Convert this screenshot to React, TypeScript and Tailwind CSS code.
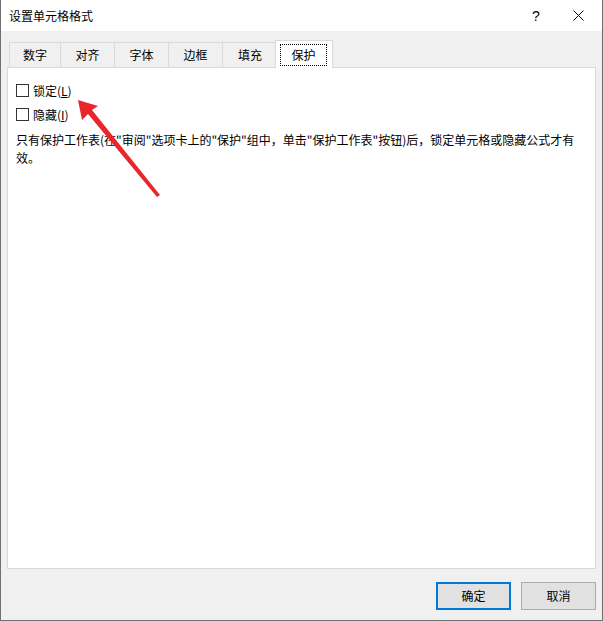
import React from 'react';

const tabs = [
  { label: '数字', cls: 'ml-[2px] w-[52px]' },
  { label: '对齐', cls: '-ml-px w-[55px]' },
  { label: '字体', cls: '-ml-px w-[55px]' },
  { label: '边框', cls: '-ml-px w-[55px]' },
  { label: '填充', cls: '-ml-px w-[56px]' },
];

export default function App() {
  return (
    <div className="relative w-[603px] h-[621px] flex flex-col bg-[#f0f0f0] border-x border-b border-[#707070] text-[12px] text-black font-['Noto_Sans_CJK_SC','Noto_Sans',sans-serif]">
      {/* 标题栏 */}
      <div className="h-[31px] bg-white flex items-center pl-[8px]">
        <span className="leading-none">设置单元格格式</span>
        <span className="ml-auto w-[14px] text-center text-[14px] leading-none font-['Liberation_Sans',sans-serif]">?</span>
        <div className="w-[46px] ml-[12px] mr-[1px] flex justify-center">
          <svg width="11" height="11" viewBox="0 0 11 11" stroke="#000" strokeWidth="1">
            <path d="M0.5 0.5 L10.5 10.5 M10.5 0.5 L0.5 10.5" />
          </svg>
        </div>
      </div>

      <div className="flex-1 flex flex-col px-[6px]">
        {/* 标签页 */}
        <div className="mt-[9px] h-[27px] flex items-end">
          {tabs.map((tab) => (
            <div key={tab.label} className={`${tab.cls} h-[25px] flex items-center justify-center border-t border-x border-[#d9d9d9] bg-[#f0f0f0]`}>
              {tab.label}
            </div>
          ))}
          <div className="relative z-10 -ml-[3px] -mb-px w-[58px] h-[28px] bg-white border-t border-x border-[#d9d9d9] pt-[3px] pl-[4px] pr-[5px] pb-[2px]">
            <div className="w-full h-full flex items-center justify-center border border-dotted border-black">保护</div>
          </div>
        </div>

        {/* 内容 */}
        <div className="h-[502px] bg-white border border-[#d9d9d9] pt-[16px] pl-[8px]">
          <label className="flex items-center h-[13px] gap-[4px]">
            <span className="w-[13px] h-[13px] border border-[#333] bg-white" />
            <span className="leading-none">
              锁定(<span className="underline">L</span>)
            </span>
          </label>
          <label className="mt-[11px] flex items-center h-[13px] gap-[4px]">
            <span className="w-[13px] h-[13px] border border-[#333] bg-white" />
            <span className="leading-none">
              隐藏(<span className="underline">I</span>)
            </span>
          </label>
          <p className="mt-[10px] leading-[18px]">
            <span className="block whitespace-nowrap">只有保护工作表(在"审阅"选项卡上的"保护"组中，单击"保护工作表"按钮)后，锁定单元格或隐藏公式才有</span>
            <span className="block">效。</span>
          </p>
        </div>

        {/* 按钮 */}
        <div className="mt-[13px] flex justify-end gap-[10px]">
          <button className="w-[75px] h-[28px] bg-[#e1e1e1] border-2 border-[#0078d7]">确定</button>
          <button className="w-[75px] h-[28px] bg-[#e1e1e1] border border-[#adadad]">取消</button>
        </div>
      </div>

      {/* 红色箭头 */}
      <svg className="absolute left-0 top-0 pointer-events-none" width="603" height="621">
        <polygon points="77,100 97,106 91,110 159,195 156,197 87,114 81,120" fill="#e8262b" />
      </svg>
    </div>
  );
}
